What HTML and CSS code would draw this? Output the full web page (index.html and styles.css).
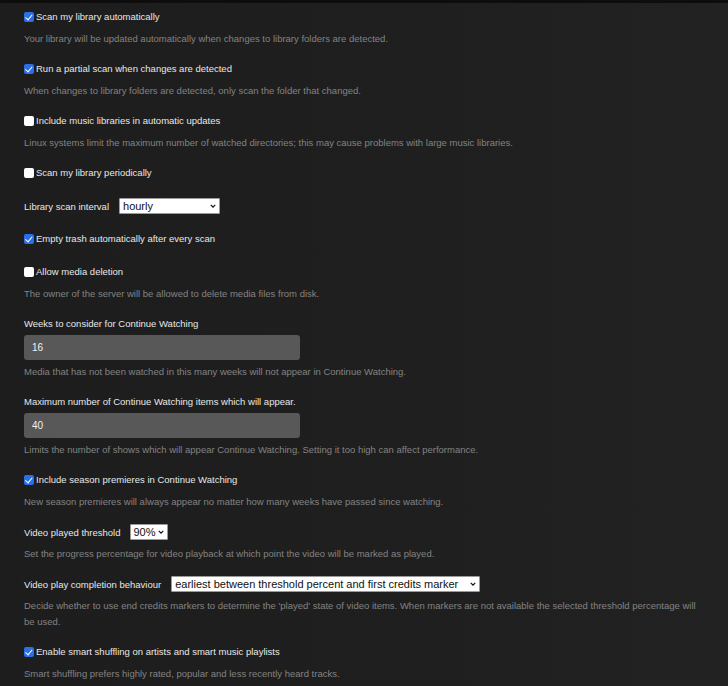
FILE: index.html
```html
<!DOCTYPE html>
<html lang="en">

<head>
    <meta charset="UTF-8">
    <meta name="viewport" content="width=device-width, initial-scale=1.0">
    <title>Library Settings</title>
    <link rel="stylesheet" href="styles.css">
</head>

<body>
    <div class="topbar"></div>
    <form class="settings">
        <div class="field">
            <label class="check-row"><input type="checkbox" class="check" checked> Scan my library automatically</label>
            <div class="desc">Your library will be updated automatically when changes to library folders are detected.</div>
        </div>

        <div class="field">
            <label class="check-row"><input type="checkbox" class="check" checked> Run a partial scan when changes are detected</label>
            <div class="desc">When changes to library folders are detected, only scan the folder that changed.</div>
        </div>

        <div class="field">
            <label class="check-row"><input type="checkbox" class="check"> Include music libraries in automatic updates</label>
            <div class="desc">Linux systems limit the maximum number of watched directories; this may cause problems with large music libraries.</div>
        </div>

        <div class="field plain">
            <label class="check-row"><input type="checkbox" class="check"> Scan my library periodically</label>
        </div>

        <div class="field plain">
            <div class="select-row">
                <span class="select-label">Library scan interval</span>
                <span class="select-wrap">
                    <select class="select select-interval">
                        <option>hourly</option>
                        <option>every 2 hours</option>
                        <option>every 6 hours</option>
                        <option>every 12 hours</option>
                        <option>daily</option>
                    </select>
                    <svg class="chevron" viewBox="0 0 8 5"><path d="M1 1 L4 4 L7 1" /></svg>
                </span>
            </div>
        </div>

        <div class="field plain">
            <label class="check-row"><input type="checkbox" class="check" checked> Empty trash automatically after every scan</label>
        </div>

        <div class="field">
            <label class="check-row"><input type="checkbox" class="check"> Allow media deletion</label>
            <div class="desc">The owner of the server will be allowed to delete media files from disk.</div>
        </div>

        <div class="field">
            <label class="text-label" for="weeks">Weeks to consider for Continue Watching</label>
            <input id="weeks" class="text-input" type="text" value="16">
            <div class="desc after-input">Media that has not been watched in this many weeks will not appear in Continue Watching.</div>
        </div>

        <div class="field">
            <label class="text-label" for="maxItems">Maximum number of Continue Watching items which will appear.</label>
            <input id="maxItems" class="text-input" type="text" value="40">
            <div class="desc after-input">Limits the number of shows which will appear Continue Watching. Setting it too high can affect performance.</div>
        </div>

        <div class="field">
            <label class="check-row"><input type="checkbox" class="check" checked> Include season premieres in Continue Watching</label>
            <div class="desc">New season premieres will always appear no matter how many weeks have passed since watching.</div>
        </div>

        <div class="field">
            <div class="select-row">
                <span class="select-label">Video played threshold</span>
                <span class="select-wrap">
                    <select class="select select-threshold">
                        <option>80%</option>
                        <option>85%</option>
                        <option selected>90%</option>
                        <option>95%</option>
                    </select>
                    <svg class="chevron" viewBox="0 0 8 5"><path d="M1 1 L4 4 L7 1" /></svg>
                </span>
            </div>
            <div class="desc after-select">Set the progress percentage for video playback at which point the video will be marked as played.</div>
        </div>

        <div class="field">
            <div class="select-row">
                <span class="select-label">Video play completion behaviour</span>
                <span class="select-wrap">
                    <select class="select select-completion">
                        <option>earliest between threshold percent and first credits marker</option>
                        <option>at threshold percent</option>
                        <option>at first credits marker</option>
                    </select>
                    <svg class="chevron" viewBox="0 0 8 5"><path d="M1 1 L4 4 L7 1" /></svg>
                </span>
            </div>
            <div class="desc after-select">Decide whether to use end credits markers to determine the 'played' state of video items. When markers are not available the selected threshold percentage will be used.</div>
        </div>

        <div class="field">
            <label class="check-row"><input type="checkbox" class="check" checked> Enable smart shuffling on artists and smart music playlists</label>
            <div class="desc">Smart shuffling prefers highly rated, popular and less recently heard tracks.</div>
        </div>
    </form>
</body>

</html>
```

FILE: styles.css
```css
* {
    margin: 0;
    padding: 0;
    box-sizing: border-box;
}

body,
html {
    height: 100%;
    overflow: hidden;
}

body {
    background: linear-gradient(90deg, #1d1d1d 0%, #1f1f1f 60%, #222222 100%);
    color: #e8e8e8;
    font-family: 'Liberation Sans', Arial, sans-serif;
    font-size: 9.5px;
}

.topbar {
    height: 3px;
    background: #0d0d0d;
}

.settings {
    display: flex;
    flex-direction: column;
    padding: 7px 20px 0 24px;
}

.field {
    display: flex;
    flex-direction: column;
    align-items: flex-start;
    margin-bottom: 15px;
}

.field.plain {
    padding-bottom: 4px;
}

.check-row {
    display: flex;
    align-items: center;
    gap: 2px;
    height: 14px;
    line-height: 14px;
}

.check {
    appearance: none;
    width: 10px;
    height: 10px;
    border-radius: 2px;
    background: #ffffff;
    position: relative;
    flex-shrink: 0;
}

.check:checked {
    background: #2a6fe6;
}

.check:checked::after {
    content: '';
    position: absolute;
    left: 3px;
    top: 1px;
    width: 3px;
    height: 5.5px;
    border: solid #ffffff;
    border-width: 0 1.5px 1.5px 0;
    transform: rotate(40deg);
}

.desc {
    margin-top: 7px;
    font-size: 9.5px;
    line-height: 16px;
    color: #838383;
}

.desc.after-input {
    margin-top: 4px;
}

.desc.after-select {
    margin-top: 7px;
}

.text-label {
    height: 14px;
    line-height: 14px;
}

.text-input {
    margin-top: 4px;
    width: 276px;
    height: 25px;
    padding: 0 8px;
    border: none;
    border-radius: 3px;
    background: #585858;
    color: #f2f2f2;
    font-family: inherit;
    font-size: 10px;
    outline: none;
}

.select-row {
    display: flex;
    align-items: center;
    gap: 10px;
    height: 14px;
}

.select-wrap {
    position: relative;
    display: inline-flex;
}

.select {
    appearance: none;
    height: 16px;
    padding: 0 12px 0 3px;
    border: 1px solid #9a9a9a;
    border-radius: 1px;
    background: #ffffff;
    color: #111111;
    font-family: inherit;
    font-size: 11px;
    line-height: 14px;
}

.select-interval {
    width: 101px;
}

.select-threshold {
    width: 38px;
    padding: 0 11px 0 2px;
}

.select-completion {
    width: 309px;
}

.chevron {
    position: absolute;
    right: 4px;
    top: 6px;
    width: 6px;
    height: 4px;
    fill: none;
    stroke: #111111;
    stroke-width: 1.6;
    pointer-events: none;
}
```
